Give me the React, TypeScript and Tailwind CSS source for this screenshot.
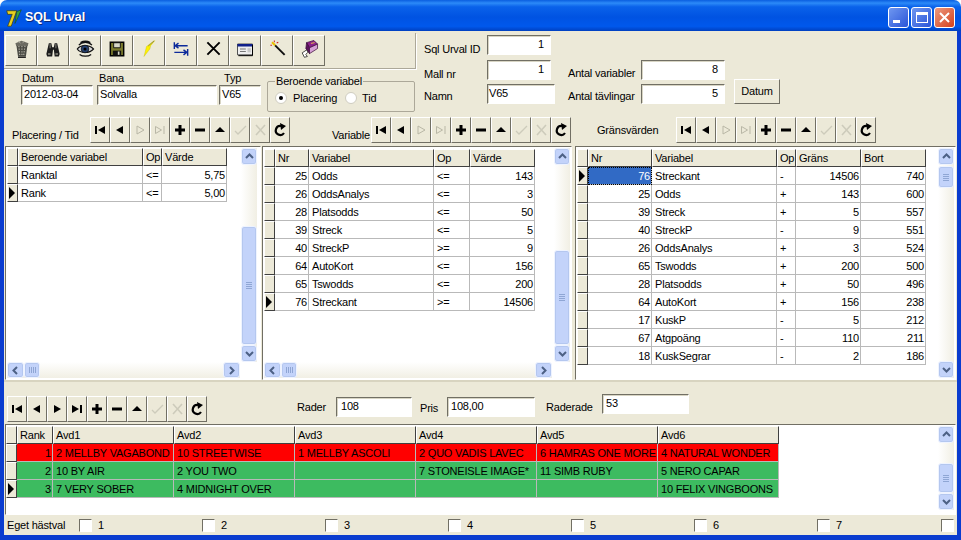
import React from "react";

const RAISED = "border border-t-white border-l-white border-r-[#716f64] border-b-[#716f64] bg-[#ece9d8]";
const SUNKEN = "border border-t-[#716f64] border-l-[#716f64] border-r-white border-b-white bg-white";

/* ---------- toolbar icons ---------- */
const Trash = () => (
  <svg width="21" height="21" viewBox="0 0 24 24">
    <path d="M6 7h13l-2 14H8z" fill="#4a4a44" />
    <path d="M5 6l7-3 8 3-1 3H6z" fill="#6c6b62" />
    <path d="M9 9l1 11M12.500 9v11M16 9l-1.500 11" stroke="#b8b6aa" strokeWidth="1.300" strokeDasharray="1.500 1.500" />
    <path d="M8 4l3 2M15 4l-2 2" stroke="#a8a69a" strokeWidth="1" />
    <path d="M8 22h9" stroke="#111" strokeWidth="1.500" />
  </svg>
);
const Binoculars = () => (
  <svg width="20" height="20" viewBox="0 0 24 24">
    <path d="M7 5h3l1 5h2l1-5h3l3 13-1 3h-5l-1-8h-1l-1 8H5l-1-3z" fill="#1c1c1c" />
    <path d="M6 17h3v2H6zM15 17h3v2h-3z" fill="#8a8a80" />
    <path d="M8 6h1v5H8zM15 6h1v5h-1z" fill="#9a9a90" />
  </svg>
);
const Eye = () => (
  <svg width="20" height="20" viewBox="0 0 26 24">
    <path d="M3 12C7 6 19 6 24 12 19 18 7 18 3 12z" fill="#d8d8d8" stroke="#111" strokeWidth="1.600" />
    <circle cx="13" cy="12" r="5" fill="#26406e" stroke="#111" />
    <circle cx="13" cy="12" r="2" fill="#000" />
    <path d="M5 7C9 2 18 2 22 7M6 19c4 3 11 3 15 0M7 3.500c4-2 9-2 13 0" fill="none" stroke="#111" strokeWidth="1.600" />
  </svg>
);
const Floppy = () => (
  <svg width="20" height="20" viewBox="0 0 24 24">
    <path d="M4 4h16v16H4z" fill="#7c7c2e" stroke="#000" strokeWidth="1.800" />
    <path d="M8 4.500h8v6H8z" fill="#d8d8c8" stroke="#000" />
    <path d="M7 14h10v6H7z" fill="#111" />
    <path d="M13 15h2v4h-2z" fill="#d8d8c8" />
  </svg>
);
const Bolt = () => (
  <svg width="20" height="20" viewBox="0 0 24 24">
    <path d="M18 2L9 9l-3 12 7-9 1-4 5-6z" fill="#fff200" stroke="#b8b000" strokeWidth="0.400" />
    <path d="M18 2.500L11 8.500" stroke="#666" strokeWidth="0.800" />
  </svg>
);
const Arrows = () => (
  <svg width="20" height="20" viewBox="0 0 24 24">
    <path d="M4 4v8M20 12v8" stroke="#0c2a9a" strokeWidth="1.700" />
    <path d="M20 8H6M9 5L5 8l4 3M4 16h14M15 13l4 3-4 3" fill="none" stroke="#0c2a9a" strokeWidth="1.700" />
  </svg>
);
const Cross = () => (
  <svg width="21" height="21" viewBox="0 0 24 24">
    <path d="M5 5l14 14M19 5L5 19" stroke="#000" strokeWidth="2.200" />
  </svg>
);
const WindowIcon = () => (
  <svg width="20" height="20" viewBox="0 0 24 24">
    <path d="M3 6h18v13H3z" fill="#eeeeee" stroke="#333" />
    <path d="M3 6h18v3H3z" fill="#10208a" />
    <path d="M6 12h7M6 15h7" stroke="#777" strokeWidth="1.200" />
    <path d="M15 11h4v5h-4z" fill="#c8c8c8" />
    <path d="M21 7v13H4" fill="none" stroke="#000" strokeWidth="1.200" />
  </svg>
);
const Wand = () => (
  <svg width="19" height="19" viewBox="0 0 24 24">
    <path d="M9 8l12 12" stroke="#111" strokeWidth="2.400" />
    <path d="M5 4l4 4" stroke="#e8c000" strokeWidth="2.600" />
    <path d="M3 8h2M8 2v2M11 5l2-1" stroke="#d02020" strokeWidth="1.300" />
  </svg>
);
const Book = () => (
  <svg width="19" height="19" viewBox="0 0 26 26">
    <path d="M9 5l10-3 5 5-11 5z" fill="#8c1f8c" stroke="#3a0a3a" />
    <path d="M9 5l4 7v8L8 13z" fill="#5c125c" stroke="#3a0a3a" />
    <path d="M13 12l11-5v6l-11 7z" fill="#d6a0d6" stroke="#3a0a3a" />
    <path d="M3 19l6-4 2 3-3 3 2 3-4 1z" fill="#fff" stroke="#111" />
    <path d="M15 6l5-1" stroke="#f0d040" strokeWidth="1.200" />
  </svg>
);

/* ---------- navigator icons ---------- */
const G = "#b9b7a6";
const G2 = "#cdcbbb";
const navIcons: Record<string, React.ReactNode> = {
  first: <path d="M3 4h2v8H3zM13 4v8L6 8z" fill="#000" />,
  prev: <path d="M11 4v8L4 8z" fill="#000" />,
  next: <path d="M5 4v8l7-4z" fill="#000" />,
  last: <path d="M3 4v8l7-4zM11 4h2v8h-2z" fill="#000" />,
  nextOff: <path d="M5 4v8l7-4z" fill="none" stroke={G} />,
  lastOff: <path d="M3.500 4.500v7l6-3.500zM12 4v8" fill="none" stroke={G} />,
  plus: <path d="M6.500 3h3v3.500H13v3H9.500V13h-3V9.500H3v-3h3.500z" fill="#000" />,
  minus: <path d="M3 6.500h10v3H3z" fill="#000" />,
  up: <path d="M8 5l5 5H3z" fill="#000" />,
  check: <path d="M3 9l3 3 8-8" fill="none" stroke={G2} strokeWidth="1.300" />,
  x: <path d="M4 3l9 10M13 3L4 13" fill="none" stroke={G2} strokeWidth="1.600" />,
  refresh: (
    <>
      <path d="M12 11A4.500 4.500 0 1 1 9 4" fill="none" stroke="#000" strokeWidth="2.200" />
      <path d="M8 1l6 3-5 4z" fill="#000" />
    </>
  ),
};
const NAV_DIM = ["first", "prev", "nextOff", "lastOff", "plus", "minus", "up", "check", "x", "refresh"];
const NAV_ALL = ["first", "prev", "next", "last", "plus", "minus", "up", "check", "x", "refresh"];

function Navigator({ items }: { items: string[] }) {
  return (
    <div className="flex">
      {items.map((k) => (
        <div key={k} className={`w-5 h-[26px] flex items-center justify-center ${RAISED}`}>
          <svg width="16" height="16" viewBox="0 0 16 16">{navIcons[k]}</svg>
        </div>
      ))}
    </div>
  );
}

/* ---------- small widgets ---------- */
function Field({ w, value, right, pad = "pl-[2px]" }: { w: string; value: string; right?: boolean; pad?: string }) {
  return (
    <div className={`${w} h-5 ${SUNKEN} shadow-[inset_1px_1px_0_#d8d5c4] ${pad} leading-[16px] text-black ${right ? "text-right pr-[6px]" : ""}`}>{value}</div>
  );
}

const Chevron = ({ d }: { d: string }) => (
  <svg width="9" height="9" viewBox="0 0 9 9">
    <path d={d} fill="none" stroke="#4d6185" strokeWidth="2" />
  </svg>
);
const SB = "rounded-[3px] border border-[#eef3ff] bg-[#c3d3fa] flex items-center justify-center shadow-[0_0_0_1px_#b4c7ef_inset]";

function VScroll({ before, thumb, after }: { before: string; thumb: string; after: string }) {
  return (
    <div className="w-[16px] h-full flex flex-col bg-[linear-gradient(90deg,#ffffff,#f1efe4)]">
      <div className={`h-[17px] shrink-0 ${SB}`}><Chevron d="M1 6l3.500-3.500L8 6" /></div>
      <div className={before} />
      <div className={`${thumb} ${SB}`}>
        <div className="w-[6px] h-[7px] bg-[repeating-linear-gradient(180deg,#8fa6d4_0px,#8fa6d4_1px,transparent_1px,transparent_2px)]" />
      </div>
      <div className={after} />
      <div className={`h-[17px] shrink-0 ${SB}`}><Chevron d="M1 3l3.500 3.500L8 3" /></div>
    </div>
  );
}
function HScroll({ w }: { w: string }) {
  return (
    <div className={`${w} h-[16px] flex bg-[linear-gradient(180deg,#ffffff,#f1efe4)]`}>
      <div className={`w-[17px] ${SB}`}><Chevron d="M6 1L2.500 4.500 6 8" /></div>
      <div className={`w-[16px] ${SB}`}>
        <div className="h-[6px] w-[7px] bg-[repeating-linear-gradient(90deg,#8fa6d4_0px,#8fa6d4_1px,transparent_1px,transparent_2px)]" />
      </div>
      <div className="flex-1" />
      <div className={`w-[17px] ${SB}`}><Chevron d="M3 1l3.500 3.500L3 8" /></div>
    </div>
  );
}

const Arrow = () => (
  <svg width="8" height="14" viewBox="0 0 8 14"><path d="M1 1l6 6-6 6z" fill="#000" /></svg>
);

const HEAD = "border border-t-white border-l-white border-r-[#404040] border-b-[#404040] bg-[#ece9d8]";

type Cell = { t: string; r?: boolean; sel?: boolean };
function Table({
  cols, head, rows, active, rowBg,
}: {
  cols: string; head: string[]; rows: Cell[][]; active: number; rowBg?: string[];
}) {
  return (
    <div className="flex flex-col">
      <div className={`grid ${cols} h-[18px]`}>
        <div className={HEAD} />
        {head.map((h) => (
          <div key={h} className={`${HEAD} pl-[2px] leading-[17px] whitespace-nowrap overflow-hidden`}>{h}</div>
        ))}
      </div>
      {rows.map((r, i) => (
        <div key={i} className={`grid ${cols} h-[18px]`}>
          <div className={`flex items-center ${HEAD}`}>
            {i === active && <Arrow />}
          </div>
          {r.map((c, j) => (
            <div
              key={j}
              className={`border-r border-b border-[#b9b9b9] leading-[18px] whitespace-nowrap overflow-hidden ${c.r ? "text-right pr-px" : "pl-[3px]"} ${c.sel ? "bg-[#316ac5] text-white outline-1 outline-dotted outline-black -outline-offset-1" : rowBg ? rowBg[i] : "bg-white"}`}
            >
              {c.t}
            </div>
          ))}
        </div>
      ))}
    </div>
  );
}

const L = (t: string): Cell => ({ t });
const R = (t: string): Cell => ({ t, r: true });

const rows1 = [
  [L("Ranktal"), L("<="), R("5,75")],
  [L("Rank"), L("<="), R("5,00")],
];
const rows2 = [
  ["25", "Odds", "<=", "143"], ["26", "OddsAnalys", "<=", "3"], ["28", "Platsodds", "<=", "50"],
  ["39", "Streck", "<=", "5"], ["40", "StreckP", ">=", "9"], ["64", "AutoKort", "<=", "156"],
  ["65", "Tswodds", "<=", "200"], ["76", "Streckant", ">=", "14506"],
].map(([a, b, c, d]) => [R(a), L(b), L(c), R(d)]);
const rows3 = [
  ["76", "Streckant", "-", "14506", "740"], ["25", "Odds", "+", "143", "600"], ["39", "Streck", "+", "5", "557"],
  ["40", "StreckP", "-", "9", "551"], ["26", "OddsAnalys", "+", "3", "524"], ["65", "Tswodds", "+", "200", "500"],
  ["28", "Platsodds", "+", "50", "496"], ["64", "AutoKort", "+", "156", "238"], ["17", "KuskP", "-", "5", "212"],
  ["67", "Atgpoäng", "-", "110", "211"], ["18", "KuskSegrar", "-", "2", "186"],
].map(([a, b, c, d, e], i) => [{ t: a, r: true, sel: i === 0 }, L(b), L(c), R(d), R(e)]);
const rows4 = [
  ["1", "2 MELLBY VAGABOND", "10 STREETWISE", "1 MELLBY ASCOLI", "2 QUO VADIS LAVEC", "6 HAMRAS ONE MORE", "4 NATURAL WONDER"],
  ["2", "10 BY AIR", "2 YOU TWO", "", "7 STONEISLE IMAGE*", "11 SIMB RUBY", "5 NERO CAPAR"],
  ["3", "7 VERY SOBER", "4 MIDNIGHT OVER", "", "", "", "10 FELIX VINGBOONS"],
].map(([a, ...rest]) => [R(a), ...rest.map(L)]);

const tools = [Trash, Binoculars, Eye, Floppy, Bolt, Arrows, Cross, WindowIcon, Wand, Book];

const Box = ({ n, w }: { n: string; w: string }) => (
  <div className={`flex items-center ${w}`}>
    <div className={`w-[13px] h-[13px] ${SUNKEN}`} />
    {n && <span className="ml-[6px]">{n}</span>}
  </div>
);

export default function App() {
  return (
    <div className="w-[961px] h-[540px] flex flex-col bg-white overflow-hidden text-[11px] tracking-[-0.2px] text-black font-['Liberation_Sans',Arial,sans-serif]">
      {/* title bar */}
      <div className="h-[31px] shrink-0 rounded-t-[7px] flex items-center pt-[4px] pl-[4px] pr-[6px] bg-[linear-gradient(180deg,#0a5ee0_0%,#2c8af8_10%,#0a62ea_22%,#0053e2_55%,#0058ec_85%,#0040c0_100%)]">
        <svg width="20" height="22" viewBox="0 0 22 22" className="mr-[1px]">
          <path d="M3 3h11l-6 17H4l5-13H4z" fill="#e8d020" stroke="#3a3a10" strokeWidth="0.800" />
          <path d="M14 4l5-2-4 9-3 6z" fill="#3aa040" stroke="#12401a" strokeWidth="0.600" />
        </svg>
        <span className="text-white font-bold text-[12.5px] tracking-normal [text-shadow:1px_1px_0_#0a2a80]">SQL Urval</span>
        <div className="ml-auto flex gap-[2px]">
          <div className="w-[21px] h-[21px] rounded-[3px] border border-white bg-[linear-gradient(135deg,#6f97f0,#2a55d8)] flex items-end pl-[4px] pb-[4px]">
            <div className="w-[7px] h-[3px] bg-white" />
          </div>
          <div className="w-[21px] h-[21px] rounded-[3px] border border-white bg-[linear-gradient(135deg,#6f97f0,#2a55d8)] flex items-center justify-center">
            <div className="w-[12px] h-[11px] border border-t-[3px] border-white" />
          </div>
          <div className="w-[21px] h-[21px] rounded-[3px] border border-white bg-[linear-gradient(135deg,#ec9a80,#d5401c)] flex items-center justify-center">
            <svg width="11" height="11" viewBox="0 0 11 11"><path d="M1 1l9 9M10 1l-9 9" stroke="#fff" strokeWidth="2" /></svg>
          </div>
        </div>
      </div>

      {/* client */}
      <div className="flex-1 min-h-0 bg-[#ece9d8] border-x-4 border-b-[5px] border-[#0a3ccf] flex flex-col">
        {/* top */}
        <div className="h-[85px] shrink-0 flex">
          <div className="w-[412px] shrink-0 flex flex-col">
            <div className="mt-[2px] h-[36px] pl-[1px] pt-[2px] flex border-r border-b border-r-[#aca899] border-b-[#aca899] shadow-[1px_1px_0_#fff]">
              {tools.map((T, i) => (
                <div key={i} className={`w-8 h-[31px] pb-[4px] flex items-center justify-center ${RAISED}`}><T /></div>
              ))}
            </div>
            <div className="flex items-start mt-[3px] pl-[17px]">
              <div className="w-[76px]">
                <div className="h-[13px] pl-[1px] leading-[12px]">Datum</div>
                <Field w="w-[72px]" value="2012-03-04" />
              </div>
              <div className="w-[122px]">
                <div className="h-[13px] pl-[2px] leading-[12px]">Bana</div>
                <Field w="w-[120px]" value="Solvalla" />
              </div>
              <div className="w-[48px]">
                <div className="h-[13px] pl-[5px] leading-[12px]">Typ</div>
                <Field w="w-[42px]" value="V65" />
              </div>
              <div className="relative w-[148px] h-[31px] mt-[9px] border border-[#aca899] rounded-[2px] flex items-center pl-[7px] pt-[3px]">
                <span className="absolute -top-[7px] left-[7px] bg-[#ece9d8] px-px leading-[12px]">Beroende variabel</span>
                <div className="w-[12px] h-[12px] rounded-full bg-white border border-[#cfcdc0] flex items-center justify-center">
                  <div className="w-[4px] h-[4px] rounded-full bg-black" />
                </div>
                <span className="ml-[6px]">Placering</span>
                <div className="ml-[8px] w-[12px] h-[12px] rounded-full bg-white border border-[#cfcdc0]" />
                <span className="ml-[5px]">Tid</span>
              </div>
            </div>
          </div>
          <div className="flex-1 flex flex-col pl-[8px] pt-[4px]">
            <div className="flex items-center h-5">
              <span className="w-[63px] pt-[8px]">Sql Urval ID</span>
              <Field w="w-[64px]" value="1" right />
            </div>
            <div className="flex items-center h-5 mt-[5px]">
              <span className="w-[63px] pt-[8px]">Mall nr</span>
              <Field w="w-[64px]" value="1" right />
              <span className="w-[73px] ml-[17px] pt-[6px]">Antal variabler</span>
              <Field w="w-[84px]" value="8" right />
            </div>
            <div className="flex items-center h-5 mt-[4px]">
              <span className="w-[63px] pt-[4px]">Namn</span>
              <Field w="w-[68px]" value="V65" pad="pl-px" />
              <span className="w-[73px] ml-[13px] pt-[4px]">Antal tävlingar</span>
              <Field w="w-[84px]" value="5" right />
              <div className={`ml-[9px] w-[46px] h-[25px] -mt-[6px] flex items-center justify-center ${RAISED}`}>Datum</div>
            </div>
          </div>
        </div>

        {/* navigators */}
        <div className="h-[30px] shrink-0 flex items-start pt-px">
          <span className="w-[86px] pl-[8px] pt-[10px]">Placering / Tid</span>
          <Navigator items={NAV_DIM} />
          <span className="w-[81px] pl-[42px] pt-[10px]">Variable</span>
          <Navigator items={NAV_DIM} />
          <span className="w-[105px] pl-[26px] pt-[5px]">Gränsvärden</span>
          <Navigator items={NAV_DIM} />
        </div>

        {/* three grids */}
        <div className="h-[234px] shrink-0 flex pl-px">
          <div className={`w-[256px] h-full p-px pr-[3px] flex ${SUNKEN}`}>
            <div className="flex-1 flex flex-col min-w-0">
              <div className="flex-1">
                <Table cols="grid-cols-[11px_125px_19px_65px]" head={["Beroende variabel", "Op", "Värde"]} rows={rows1} active={1} />
              </div>
              <HScroll w="w-[233px]" />
            </div>
            <div className="w-[16px] h-full -ml-[16px] pb-[16px]">
              <VScroll before="h-[61px]" thumb="flex-1" after="h-0" />
            </div>
          </div>
          <div className={`ml-px w-[310px] h-full p-px flex ${SUNKEN}`}>
            <div className="flex-1 flex flex-col min-w-0">
              <div className="flex-1 pt-px">
                <Table cols="grid-cols-[11px_34px_125px_36px_65px]" head={["Nr", "Variabel", "Op", "Värde"]} rows={rows2} active={7} />
              </div>
              <HScroll w="w-[288px]" />
            </div>
            <div className="w-[16px] h-full -ml-[16px] pb-[16px]">
              <VScroll before="h-[85px]" thumb="flex-1" after="h-0" />
            </div>
          </div>
          <div className={`ml-[3px] w-[381px] h-full p-px flex ${SUNKEN}`}>
            <div className="flex-1 pt-px">
              <Table cols="grid-cols-[11px_64px_125px_19px_65px_65px]" head={["Nr", "Variabel", "Op", "Gräns", "Bort"]} rows={rows3} active={0} />
            </div>
            <VScroll before="h-px" thumb="h-[22px]" after="flex-1" />
          </div>
        </div>

        {/* bottom toolbar */}
        <div className="h-[44px] shrink-0 flex items-start border-t-2 border-t-[#d8d4c0]">
          <div className="mt-[14px] ml-[3px]"><Navigator items={NAV_ALL} /></div>
          <span className="ml-[90px] mt-[17px] w-[39px]">Rader</span>
          <div className="mt-[14px] pt-px"><Field w="w-[76px]" value="108" pad="pl-[4px]" /></div>
          <span className="ml-[8px] mt-[18px] w-[27px]">Pris</span>
          <div className="mt-[14px] pt-px"><Field w="w-[88px]" value="108,00" pad="pl-[3px]" /></div>
          <span className="ml-[11px] mt-[17px] w-[56px]">Raderade</span>
          <div className="mt-[12px]"><Field w="w-[87px]" value="53" pad="pl-[3px]" /></div>
        </div>

        {/* result grid */}
        <div className={`h-[91px] shrink-0 ml-px w-[951px] py-px pr-px flex justify-between ${SUNKEN}`}>
          <Table
            cols="grid-cols-[11px_36px_121px_121px_121px_121px_121px_121px]"
            head={["Rank", "Avd1", "Avd2", "Avd3", "Avd4", "Avd5", "Avd6"]}
            rows={rows4}
            active={2}
            rowBg={["bg-[#ff0000]", "bg-[#3dbb60]", "bg-[#3dbb60]"]}
          />
          <div className="h-[84px]">
            <VScroll before="h-[20px]" thumb="flex-1" after="h-0" />
          </div>
        </div>

        {/* check row */}
        <div className="flex-1 flex items-center pl-[3px]">
          <span className="w-[72px]">Eget hästval</span>
          <Box n="1" w="w-[123px]" />
          <Box n="2" w="w-[123px]" />
          <Box n="3" w="w-[123px]" />
          <Box n="4" w="w-[123px]" />
          <Box n="5" w="w-[123px]" />
          <Box n="6" w="w-[123px]" />
          <Box n="7" w="w-[124px]" />
          <Box n="" w="w-[13px]" />
        </div>
      </div>
    </div>
  );
}
